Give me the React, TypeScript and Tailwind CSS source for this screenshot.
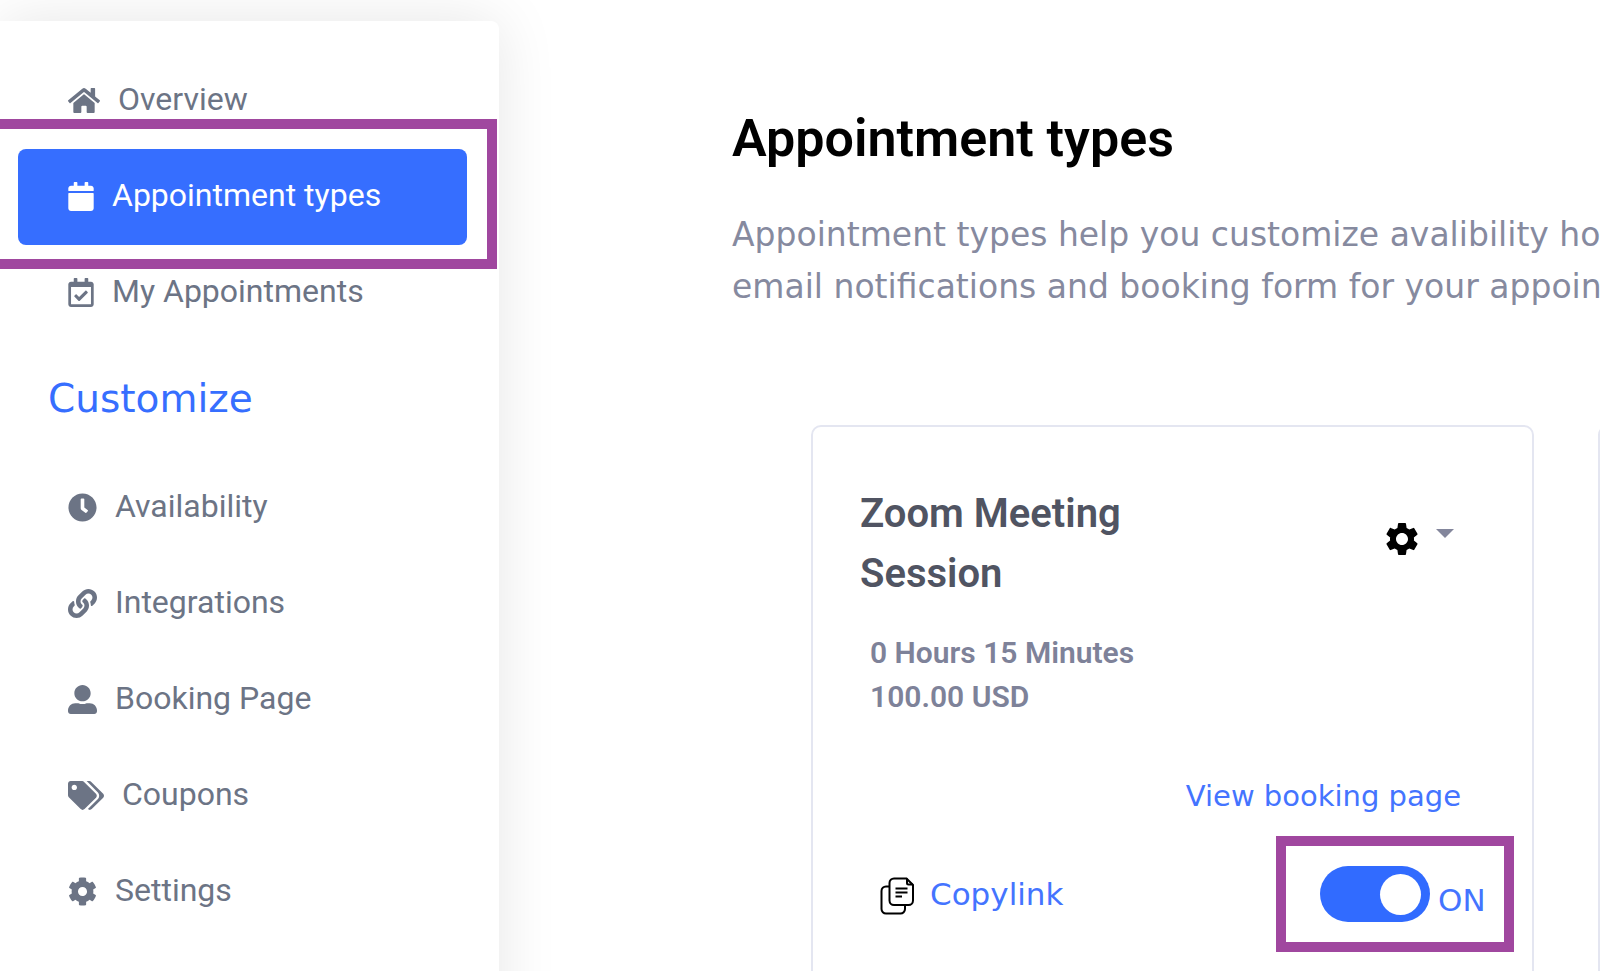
import { useState } from "react";
import type { ReactNode } from "react";
import type { IconType } from "react-icons";
import {
  FaCalendar,
  FaClock,
  FaCog,
  FaHome,
  FaLink,
  FaRegCalendarCheck,
  FaTags,
  FaUserAlt,
} from "react-icons/fa";
import { MdSettings } from "react-icons/md";

type NavItem = { label: string; icon: IconType; iconWidth: string; active?: boolean };

const mainItems: NavItem[] = [
  { label: "Overview", icon: FaHome, iconWidth: "w-8" },
  { label: "Appointment types", icon: FaCalendar, iconWidth: "w-[26px]", active: true },
  { label: "My Appointments", icon: FaRegCalendarCheck, iconWidth: "w-[26px]" },
];

const customizeItems: NavItem[] = [
  { label: "Availability", icon: FaClock, iconWidth: "w-[29px]" },
  { label: "Integrations", icon: FaLink, iconWidth: "w-[29px]" },
  { label: "Booking Page", icon: FaUserAlt, iconWidth: "w-[29px]" },
  { label: "Coupons", icon: FaTags, iconWidth: "w-9" },
  { label: "Settings", icon: FaCog, iconWidth: "w-[29px]" },
];

function NavList({ items }: { items: NavItem[] }) {
  return (
    <ul>
      {items.map(({ label, icon: Icon, iconWidth, active }) => (
        <li key={label} className="relative">
          <a
            href="#"
            aria-current={active ? "page" : undefined}
            className={
              "flex h-24 items-center gap-[18px] rounded-lg pb-1 pl-[50px] text-[32px] leading-10 " +
              (active ? "bg-[#366eff] text-white" : "text-[#6c7485]")
            }
          >
            <span className="pt-[3px]">
              <Icon className={"h-[29px] shrink-0 " + iconWidth} aria-hidden="true" />
            </span>
            <span>{label}</span>
          </a>
          {active && (
            <span className="pointer-events-none absolute -top-[30px] -right-[30px] -bottom-6 -left-10 border-10 border-[#a0479f]" />
          )}
        </li>
      ))}
    </ul>
  );
}

function CopyIcon() {
  return (
    <svg viewBox="0 0 34 38" fill="none" stroke="#000" strokeWidth="2" className="h-[38px] w-[34px]" aria-hidden="true">
      <path d="M9.500 9.500H6a4.500 4.500 0 0 0-4.500 4.500V32A4.500 4.500 0 0 0 6 36.500h14.500A4.500 4.500 0 0 0 25 32v-3.500" />
      <path d="M14 1.500h12.500L33 8v15.500a4.500 4.500 0 0 1-4.500 4.500H14a4.500 4.500 0 0 1-4.500-4.500V6A4.500 4.500 0 0 1 14 1.500Z" />
      <path d="M27 1.500v4.500a1.500 1.500 0 0 0 1.500 1.500H33" />
      <path d="M15.500 11.500h12M15.500 15.500h12M15.500 19.500h6.500" />
    </svg>
  );
}

function Card({ children }: { children?: ReactNode }) {
  return <article className="rounded-[10px] border-2 border-[#e4e6f1] bg-white">{children}</article>;
}

export default function App() {
  const [on, setOn] = useState(true);
  return (
    <div className="flex h-screen overflow-hidden bg-white font-['Roboto',sans-serif]">
      <aside className="mt-[21px] -mb-20 w-[499px] shrink-0 rounded-tr-lg bg-white pt-8 pr-8 pl-[18px] shadow-[0_0_60px_rgba(0,0,0,0.1)]">
        <nav>
          <NavList items={mainItems} />
          <h2 className="pt-8 pb-[35px] pl-[30px] font-['DejaVu_Sans',sans-serif] text-[39px] leading-[52px] text-[#366eff]">
            Customize
          </h2>
          <NavList items={customizeItems} />
        </nav>
      </aside>

      <main className="min-w-0 flex-1 pt-[109px] pl-[233px]">
        <h1 className="text-[52px] leading-[60px] font-semibold text-black">Appointment types</h1>
        <p className="mt-10 font-['DejaVu_Sans',sans-serif] text-[33px] leading-[52px] whitespace-nowrap text-[#868a9f]">
          Appointment types help you customize avalibility hours,
          <br />
          email notifications and booking form for your appointments.
        </p>

        <div className="mt-28 ml-[79px] grid h-[640px] grid-cols-[723px_723px] gap-16">
          <Card>
            <div className="flex flex-col pt-[57px] pr-[18px] pl-[47px]">
              <div className="flex items-start justify-between pr-[60px]">
                <h3 className="w-80 text-[40px] leading-[60px] font-semibold text-[#505462]">
                  Zoom Meeting Session
                </h3>
                <button type="button" aria-label="Session options" className="flex items-start gap-3.5 pt-[35px]">
                  <MdSettings className="size-10 text-black" aria-hidden="true" />
                  <svg viewBox="0 0 18 9" className="mt-2.5 h-[9px] w-[18px] fill-[#83869c]" aria-hidden="true">
                    <path d="M0 0h18L9 9z" />
                  </svg>
                </button>
              </div>
              <p className="mt-[27px] pl-[10px] text-[30px] leading-[44px] font-semibold text-[#7e8299]">
                0 Hours 15 Minutes
                <br />
                100.00 USD
              </p>
              <a
                href="#"
                className="mt-[57px] self-end pr-[53px] font-['DejaVu_Sans',sans-serif] text-[29px] leading-10 text-[#4474ff]"
              >
                View booking page
              </a>
              <div className="mt-5 flex items-start justify-between">
                <a
                  href="#"
                  className="mt-[38px] flex items-center gap-4 pl-5 font-['DejaVu_Sans',sans-serif] text-[31px] leading-10 text-[#4474ff]"
                >
                  <CopyIcon />
                  <span className="pb-1">Copylink</span>
                </a>
                <label className="flex h-[116px] w-[238px] items-center gap-2 border-10 border-[#a0479f] pl-[34px] font-['DejaVu_Sans',sans-serif] text-[31px] text-[#4474ff]">
                  <input
                    type="checkbox"
                    role="switch"
                    checked={on}
                    onChange={(e) => setOn(e.target.checked)}
                    className="flex h-14 w-[110px] shrink-0 appearance-none items-center rounded-full bg-gray-300 px-[9px] before:size-[41px] before:rounded-full before:bg-white checked:justify-end checked:bg-[#316bff]"
                  />
                  <span className="pt-3">{on ? "ON" : "OFF"}</span>
                </label>
              </div>
            </div>
          </Card>
          <Card />
        </div>
      </main>
    </div>
  );
}
